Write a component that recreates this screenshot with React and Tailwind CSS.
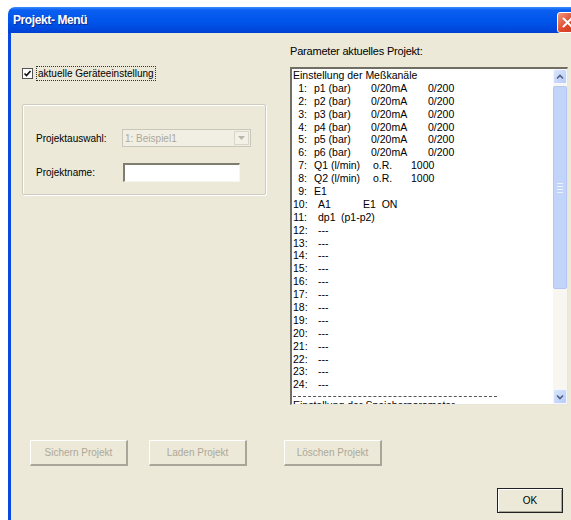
import React from 'react';

// channel table rows: number, indent class, cells [widthClass, text]
const channels = [
  ['1:', 'ml-[7px]', [['w-[57px]', 'p1 (bar)'], ['w-[57px]', '0/20mA'], ['', '0/200']]],
  ['2:', 'ml-[7px]', [['w-[57px]', 'p2 (bar)'], ['w-[57px]', '0/20mA'], ['', '0/200']]],
  ['3:', 'ml-[7px]', [['w-[57px]', 'p3 (bar)'], ['w-[57px]', '0/20mA'], ['', '0/200']]],
  ['4:', 'ml-[7px]', [['w-[57px]', 'p4 (bar)'], ['w-[57px]', '0/20mA'], ['', '0/200']]],
  ['5:', 'ml-[7px]', [['w-[57px]', 'p5 (bar)'], ['w-[57px]', '0/20mA'], ['', '0/200']]],
  ['6:', 'ml-[7px]', [['w-[57px]', 'p6 (bar)'], ['w-[57px]', '0/20mA'], ['', '0/200']]],
  ['7:', 'ml-[7px]', [['w-[59px]', 'Q1 (l/min)'], ['w-[38px]', 'o.R.'], ['', '1000']]],
  ['8:', 'ml-[7px]', [['w-[59px]', 'Q2 (l/min)'], ['w-[38px]', 'o.R.'], ['', '1000']]],
  ['9:', 'ml-[7px]', [['', 'E1']]],
  ['10:', 'ml-[11px]', [['w-[45px]', 'A1'], ['', 'E1  ON']]],
  ['11:', 'ml-[11px]', [['w-[23px]', 'dp1'], ['', '(p1-p2)']]],
  ['12:', 'ml-[11px]', [['', '---']]],
  ['13:', 'ml-[11px]', [['', '---']]],
  ['14:', 'ml-[11px]', [['', '---']]],
  ['15:', 'ml-[11px]', [['', '---']]],
  ['16:', 'ml-[11px]', [['', '---']]],
  ['17:', 'ml-[11px]', [['', '---']]],
  ['18:', 'ml-[11px]', [['', '---']]],
  ['19:', 'ml-[11px]', [['', '---']]],
  ['20:', 'ml-[11px]', [['', '---']]],
  ['21:', 'ml-[11px]', [['', '---']]],
  ['22:', 'ml-[11px]', [['', '---']]],
  ['23:', 'ml-[11px]', [['', '---']]],
  ['24:', 'ml-[11px]', [['', '---']]],
];

const ScrollArrow = ({ up }) => (
  <div className="w-[14px] h-[15px] rounded-[2px] border border-[#f4f7ff] bg-[linear-gradient(135deg,#dce6fd,#b7cbf7)] flex items-center justify-center">
    <svg width="8" height="6" viewBox="0 0 8 6">
      <path d={up ? 'M1 4.5 L4 1.5 L7 4.5' : 'M1 1.5 L4 4.5 L7 1.5'} fill="none" stroke="#4d6185" strokeWidth="1.6" />
    </svg>
  </div>
);

const Scrollbar = () => (
  <div className="w-[14px] flex flex-col bg-[#f7f6f0] shrink-0">
    <ScrollArrow up />
    <div className="mt-[2px] h-[203px] rounded-[2px] border border-[#b3c6f4] bg-[#c3d4fb] flex items-center justify-center">
      <div className="flex flex-col gap-[2px]">
        <div className="w-[6px] h-px bg-[#eef3ff]" />
        <div className="w-[6px] h-px bg-[#eef3ff]" />
        <div className="w-[6px] h-px bg-[#eef3ff]" />
        <div className="w-[6px] h-px bg-[#eef3ff]" />
      </div>
    </div>
    <div className="flex-1" />
    <ScrollArrow />
  </div>
);

const DisabledButton = ({ label, className }) => (
  <div className={`h-[26px] w-[98px] border-t border-l border-t-white border-l-white border-b-2 border-r-2 border-b-[#a8a698] border-r-[#a8a698] bg-[#ece9d8] flex items-center justify-center text-[#aca899] ${className}`}>
    {label}
  </div>
);

export default function App() {
  return (
    <div className="w-[571px] h-[520px] bg-white overflow-hidden pt-[7px] pl-[8px] font-['Liberation_Sans',Arial,sans-serif] text-[10px] text-black">
      <div className="w-[572px]">
        {/* title bar */}
        <div className="h-[26px] rounded-t-[7px] bg-[linear-gradient(180deg,#3a8cff_0%,#0a5ef0_12%,#0055ea_55%,#0049de_85%,#003fd0_100%)] flex items-center pl-[5px] pr-[2px]">
          <span className="text-white font-bold text-[12px] tracking-[-0.4px] [text-shadow:1px_1px_0_#0a2a8a]">Projekt- Menü</span>
          <div className="ml-auto mt-[4px] w-[21px] h-[21px] rounded-[3px] border border-white bg-[linear-gradient(135deg,#f09a7e,#e0462a_55%,#c93c1c)] flex items-center justify-center">
            <svg width="11" height="11" viewBox="0 0 11 11">
              <path d="M1.5 1.5 L9.5 9.5 M9.5 1.5 L1.5 9.5" stroke="white" strokeWidth="2" strokeLinecap="round" />
            </svg>
          </div>
        </div>

        {/* dialog body */}
        <div className="h-[487px] border-l-[3px] border-[#0a49e0] bg-[#ece9d8] pl-[11px]">
          <div className="flex pt-[12px]">
            {/* left column */}
            <div className="w-[268px] pt-[21px]">
              <div className="flex items-center h-[15px]">
                <div className="w-[11px] h-[11px] border border-[#555] bg-white flex items-center justify-center">
                  <svg width="9" height="9" viewBox="0 0 9 9">
                    <path d="M1.5 4.5 L3.5 6.5 L7.5 2" fill="none" stroke="#111" strokeWidth="1.7" />
                  </svg>
                </div>
                <span className="ml-[3px] border border-dotted border-[#333] px-[1px] leading-[13px]">aktuelle Geräteeinstellung</span>
              </div>

              <div className="mt-[23px] w-[244px] h-[91px] border border-[#cfccbd] rounded-[2px] shadow-[inset_1px_1px_0_#fff,1px_1px_0_#fff] pl-[13px] pt-[24px]">
                <div className="flex items-center h-[18px]">
                  <span className="w-[86px]">Projektauswahl:</span>
                  <div className="w-[129px] h-[18px] border border-[#c9c7ba] bg-[#f1efe4] flex items-center">
                    <span className="pl-[2px] text-[#aca899] flex-1">1: Beispiel1</span>
                    <div className="w-[15px] h-[14px] mr-[1px] border border-[#d8d6c9] bg-[#f3f1e7] flex items-center justify-center">
                      <svg width="7" height="4" viewBox="0 0 7 4">
                        <path d="M0 0 L7 0 L3.5 4 Z" fill="#b8b6aa" />
                      </svg>
                    </div>
                  </div>
                </div>
                <div className="flex items-center mt-[16px]">
                  <span className="w-[87px]">Projektname:</span>
                  <div className="w-[117px] h-[19px] bg-white border-t-2 border-l-2 border-t-[#7f7d70] border-l-[#7f7d70] border-b border-r border-b-[#f6f5ee] border-r-[#f6f5ee]" />
                </div>
              </div>
            </div>

            {/* right column */}
            <div className="w-[278px]">
              <div className="h-[13px] leading-[13px] text-[11px] tracking-[-0.2px]">Parameter aktuelles Projekt:</div>
              <div className="mt-[9px] h-[338px] flex bg-white border-t-2 border-l-2 border-t-[#716f64] border-l-[#716f64] border-b border-r border-b-[#e8e6da] border-r-[#e8e6da]">
                <div className="flex-1 overflow-hidden pl-[1px] text-[10.5px] leading-[12.9px] whitespace-pre">
                  <div className="h-[12.9px]">Einstellung der Meßkanäle</div>
                  {channels.map(([n, indent, cells]) => (
                    <div key={n} className="flex h-[12.9px]">
                      <span className="w-[14px] text-right">{n}</span>
                      <span className={`flex ${indent}`}>
                        {cells.map(([w, t], i) => (
                          <span key={i} className={w}>{t}</span>
                        ))}
                      </span>
                    </div>
                  ))}
                  <div className="mt-[5px] w-[204px] border-t border-dashed border-[#555]" />
                  <div className="mt-[2px]">Einstellung der Speicherparameter</div>
                </div>
                <Scrollbar />
              </div>
            </div>
          </div>

          {/* project buttons */}
          <div className="flex mt-[35px] pl-[8px]">
            <DisabledButton label="Sichern Projekt" />
            <DisabledButton label="Laden Projekt" className="ml-[21px]" />
            <DisabledButton label="Löschen Projekt" className="ml-[37px]" />
          </div>

          <div className="flex mt-[22px] pl-[475px]">
            <div className="w-[66px] h-[25px] border border-[#222] bg-[#ece9d8] shadow-[inset_1px_1px_0_#fff,inset_-1px_-1px_0_#a8a698] flex items-center justify-center">
              OK
            </div>
          </div>
        </div>
      </div>
    </div>
  );
}
